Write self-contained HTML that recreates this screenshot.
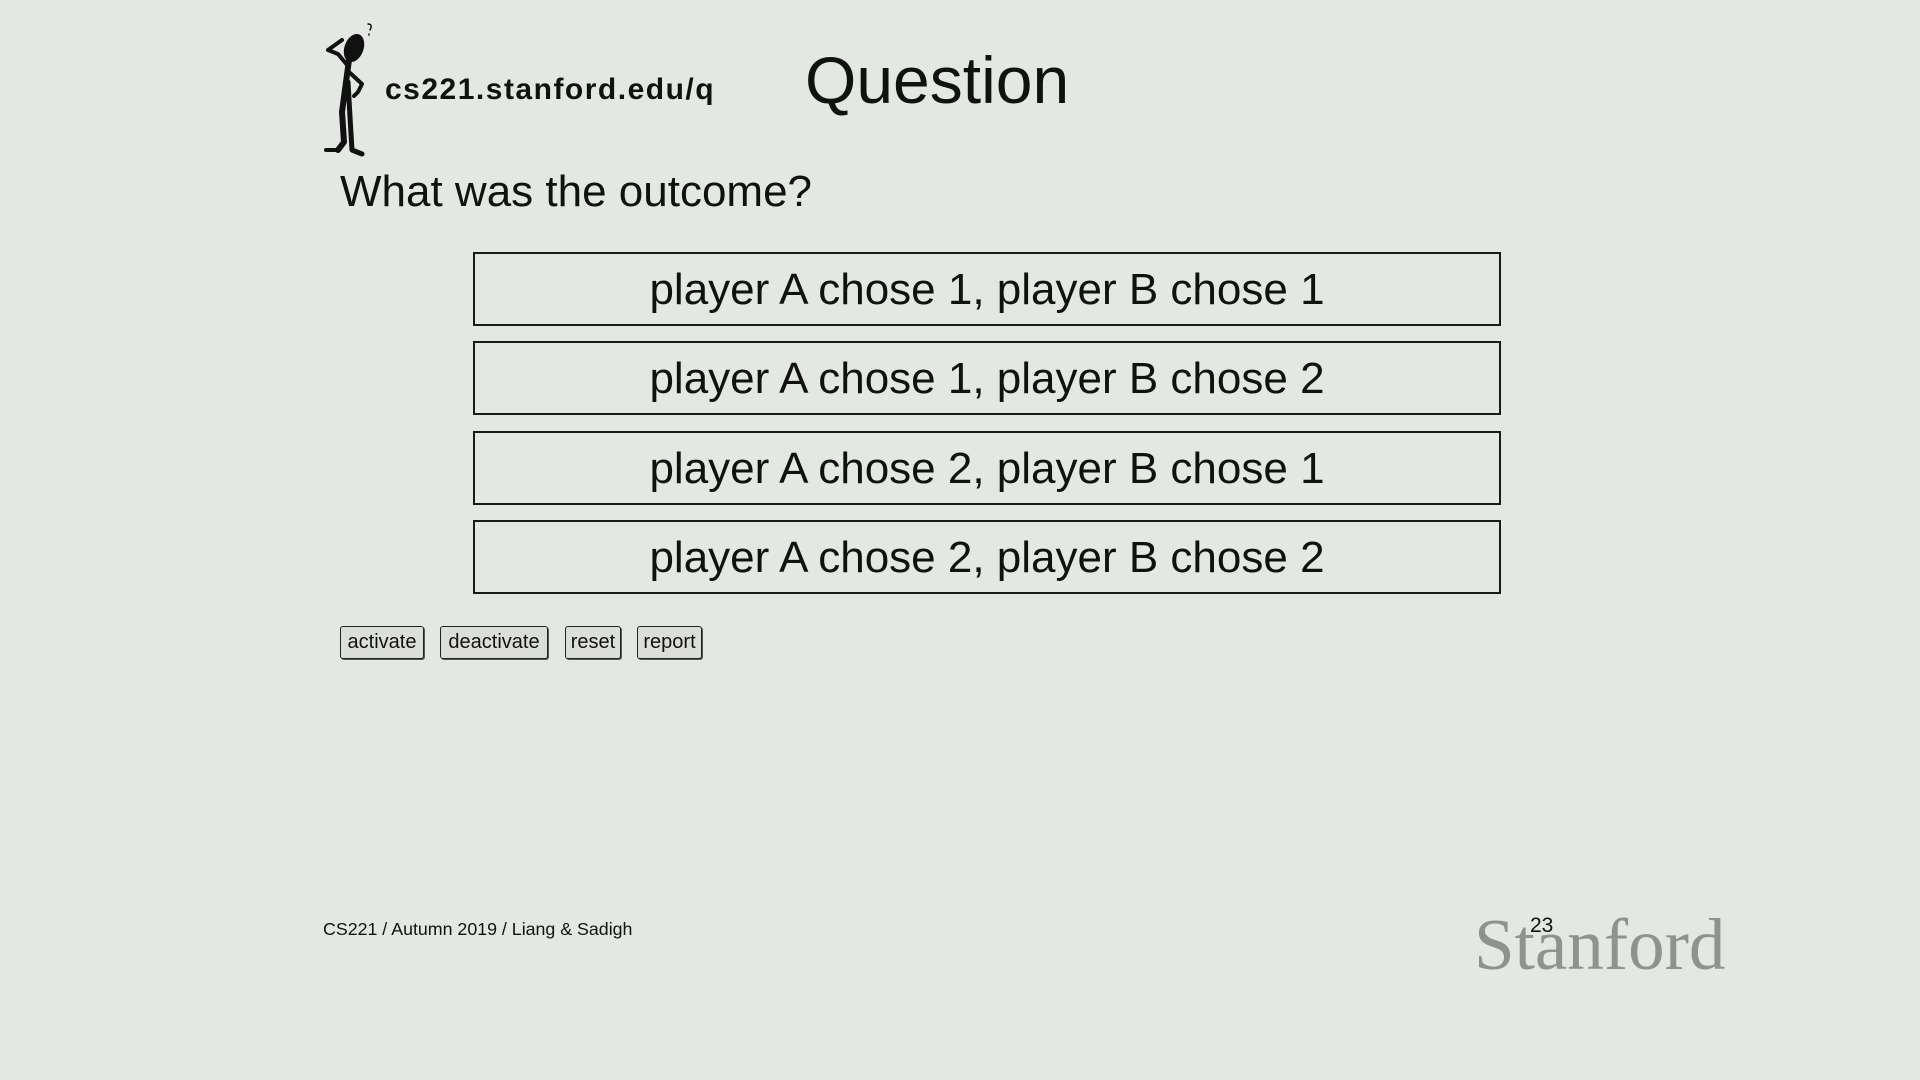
<!DOCTYPE html>
<html><head><meta charset="utf-8"><style>
body{margin:0;width:1920px;height:1080px;background:#e4e8e2;font-family:"Liberation Sans",Arial,sans-serif;color:#111;position:relative;overflow:hidden}
.a{position:absolute;white-space:nowrap}
.box{position:absolute;left:473px;width:1024px;height:70px;border:2px solid #1a1a1a;text-align:center;font-size:44px;line-height:72px;box-sizing:content-box}
.btn{position:absolute;top:626px;height:31px;border:1px solid #222;border-radius:3px;background:#dcdfd9;font-size:20px;line-height:31px;text-align:center;box-shadow:1px 1px 0 #555}
</style></head><body>
<svg class="a" style="left:318px;top:22px" width="62" height="140" viewBox="0 0 62 140">
<g fill="#111" stroke="#111" stroke-linecap="round" stroke-linejoin="round">
<ellipse cx="36" cy="26" rx="9" ry="14" transform="rotate(20 36 26)"/>
<path d="M31 38 L28 60 L24 90 L26 120 L20 128" fill="none" stroke-width="6"/>
<path d="M30 60 L32 95 L34 128 L44 132" fill="none" stroke-width="5"/>
<path d="M30 44 L20 32 L10 28 L24 18" fill="none" stroke-width="4"/>
<path d="M31 50 L44 62 L40 70 L36 74" fill="none" stroke-width="4"/>
<path d="M8 128 L20 128" stroke-width="4"/>
<path d="M52 8 q3 -6 -2 -6 M51 12 l0 1" fill="none" stroke-width="1.5"/>
</g></svg>
<div class="a" style="left:385px;top:73px;font-size:30px;font-weight:bold;letter-spacing:1.5px">cs221.stanford.edu/q</div>
<div class="a" style="left:805px;top:42px;font-size:66px">Question</div>
<div class="a" style="left:340px;top:167px;font-size:44px">What was the outcome?</div>
<div class="box" style="top:252px">player A chose 1, player B chose 1</div>
<div class="box" style="top:341px">player A chose 1, player B chose 2</div>
<div class="box" style="top:431px">player A chose 2, player B chose 1</div>
<div class="box" style="top:520px">player A chose 2, player B chose 2</div>
<div class="btn" style="left:340px;width:82px">activate</div>
<div class="btn" style="left:440px;width:106px">deactivate</div>
<div class="btn" style="left:565px;width:54px">reset</div>
<div class="btn" style="left:637px;width:63px">report</div>
<div class="a" style="left:323px;top:919px;font-size:17.8px">CS221 / Autumn 2019 / Liang &amp; Sadigh</div>
<div class="a" style="left:1474px;top:903px;font-size:73px;font-family:'Liberation Serif',serif;color:#8f938c">Stanford</div>
<div class="a" style="left:1530px;top:914px;font-size:21px">23</div>
</body></html>
